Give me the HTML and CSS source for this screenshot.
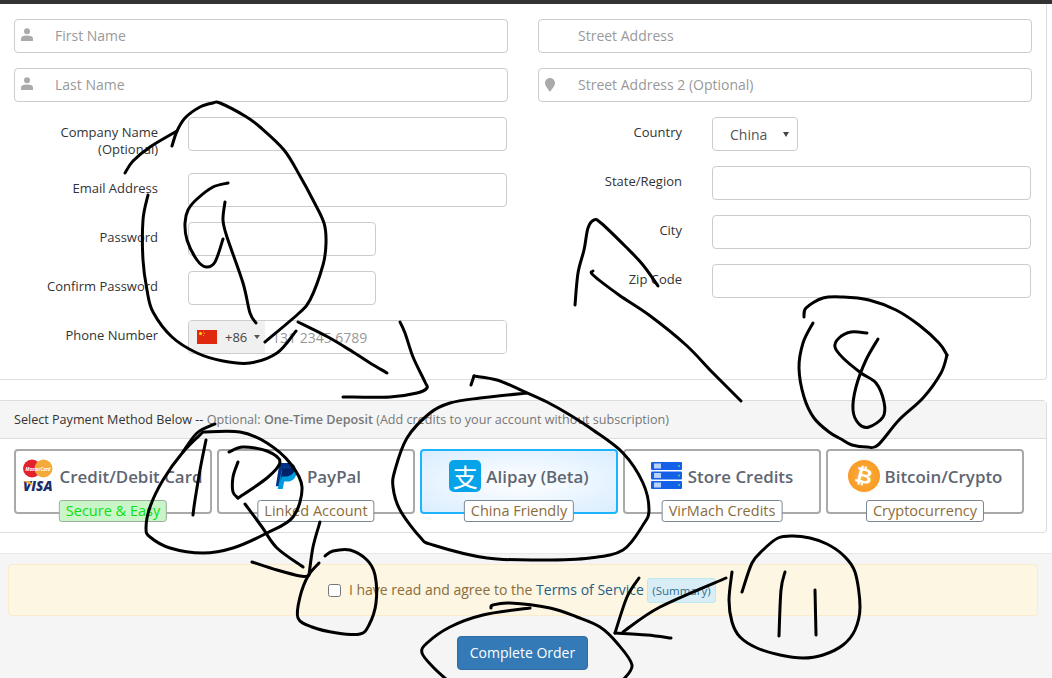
FILE: index.html
```html
<!DOCTYPE html>
<html lang="en">
<head>
<meta charset="utf-8">
<title>Checkout</title>
<link rel="stylesheet" href="styles.css">
</head>
<body>
<div class="topbar"></div>
<section class="form-panel">
  <div class="col">
    <div class="row icon-row">
      <svg class="field-icon" viewBox="0 0 12 14"><circle cx="6" cy="3.200" r="3"/><path d="M0 13v-2.500C0 8.500 2 7.500 6 7.500s6 1 6 3V13z"/></svg>
      <input class="field with-icon" placeholder="First Name">
    </div>
    <div class="row icon-row">
      <svg class="field-icon" viewBox="0 0 12 14"><circle cx="6" cy="3.200" r="3"/><path d="M0 13v-2.500C0 8.500 2 7.500 6 7.500s6 1 6 3V13z"/></svg>
      <input class="field with-icon" placeholder="Last Name">
    </div>
    <div class="row labelled tall"><label>Company Name (Optional)</label><input class="field"></div>
    <div class="row labelled"><label>Email Address</label><input class="field"></div>
    <div class="row labelled"><label>Password</label><input class="field short" type="password"></div>
    <div class="row labelled"><label>Confirm Password</label><input class="field short" type="password"></div>
    <div class="row labelled last"><label>Phone Number</label>
      <div class="phone">
        <div class="dial">
          <svg class="flag" viewBox="0 0 20 14"><rect width="20" height="14" fill="#de2910"/><circle cx="3.500" cy="3.500" r="1.500" fill="#ffde00"/><circle cx="6.500" cy="2" r=".5" fill="#ffde00"/><circle cx="7.500" cy="3.500" r=".5" fill="#ffde00"/><circle cx="6.500" cy="5.500" r=".5" fill="#ffde00"/></svg>
          <span class="code">+86</span><span class="dial-caret"></span>
        </div>
        <input class="phone-input" placeholder="131 2345 6789">
      </div>
    </div>
  </div>
  <div class="col">
    <div class="row icon-row"><input class="field with-icon" placeholder="Street Address"></div>
    <div class="row icon-row">
      <svg class="field-icon pin" viewBox="0 0 10 14"><path d="M5 0C2.200 0 0 2.200 0 5c0 3 3.500 6.500 5 9 1.500-2.500 5-6 5-9 0-2.800-2.200-5-5-5z"/></svg>
      <input class="field with-icon" placeholder="Street Address 2 (Optional)">
    </div>
    <div class="row labelled"><label>Country</label><span class="select-wrap"><select class="country"><option>China</option></select></span></div>
    <div class="row labelled"><label>State/Region</label><input class="field"></div>
    <div class="row labelled"><label>City</label><input class="field"></div>
    <div class="row labelled last"><label>Zip Code</label><input class="field"></div>
  </div>
</section>

<section class="pay-panel">
  <header class="pay-head">Select Payment Method Below -- <span class="muted">Optional: <b>One-Time Deposit</b> (Add credits to your account without subscription)</span></header>
  <div class="methods">
    <div class="method">
      <svg class="cards" viewBox="0 0 32 34"><circle cx="9" cy="9.500" r="9" fill="#e2232e"/><circle cx="20.500" cy="9.500" r="9" fill="#f5a93a"/><text x="15" y="11.500" class="mc">MasterCard</text><text x="0" y="32" class="visa">VISA</text><path d="M0 22h7l2 4.500C6 24.500 3 23 0 22z" fill="#f5a93a"/></svg>
      <span>Credit/Debit Card</span><em class="tag green">Secure &amp; Easy</em>
    </div>
    <div class="method">
      <svg class="pp" viewBox="0 0 24 28"><path d="M5 0h10c5 0 8 3 7 8-1 6-5 9-11 9H8l-1.500 8H1z" fill="#003087"/><path d="M8 5h10c4 0 6 2 5 7-1 5-5 8-10 8h-3l-1.500 8H3z" fill="#009cde"/><path d="M8 5h10.500c1 0 2 .3 3 .8C21 11 17 14.500 11 14.500H7.600L6 20z" fill="#012169"/></svg>
      <span>PayPal</span><em class="tag">Linked Account</em>
    </div>
    <div class="method selected">
      <span class="ali">支</span>
      <span>Alipay (Beta)</span><em class="tag">China Friendly</em>
    </div>
    <div class="method">
      <svg class="srv" viewBox="0 0 32 28"><rect y="0" width="31" height="8" rx="1" fill="#1560e8"/><rect x="3" y="1.500" width="7" height="5" fill="#b9d2f7"/><circle cx="28" cy="4" r=".9" fill="#5fe08a"/><rect y="9.500" width="31" height="8" rx="1" fill="#1560e8"/><rect x="3" y="11" width="7" height="5" fill="#b9d2f7"/><circle cx="28" cy="13.500" r=".9" fill="#5fe08a"/><rect y="19" width="31" height="8" rx="1" fill="#1560e8"/><rect x="3" y="20.500" width="7" height="5" fill="#b9d2f7"/><circle cx="28" cy="23" r=".9" fill="#5fe08a"/></svg>
      <span>Store Credits</span><em class="tag">VirMach Credits</em>
    </div>
    <div class="method">
      <span class="btc"><i>₿</i></span>
      <span>Bitcoin/Crypto</span><em class="tag">Cryptocurrency</em>
    </div>
  </div>
</section>

<section class="order-panel">
  <div class="tos">
    <input type="checkbox" class="tick">
    <span class="tos-text">I have read and agree to the <a class="tos-link">Terms of Service</a></span>
    <span class="summary">(Summary)</span>
  </div>
  <button class="submit">Complete Order</button>
</section>

<svg class="ink" viewBox="0 0 1052 678">
  <polyline points="125,173 133,161 150,147 177,131"/>
  <polyline points="172,146 177,131 185,118 200,107 213,103 220,103 245,116 260,127 284,150 300,176 313,200 324,223 326,243 323,265 310,300 298,314 265,342"/>
  <polyline points="296,331 277,353 250,363 223,361 197,353 172,337 153,312 147,290 143,260 143,220 148,195"/>
  <polyline points="228,183 213,187 197,199 188,210 185,223 187,240 197,260 206,267 215,262 223,239"/>
  <polyline points="225,202 223,220 227,237 243,283 250,313 256,323"/>
  <polyline points="298,322 328,337 353,352 370,363 387,373"/>
  <polyline points="343,397 390,397 417,393 427,388 425,382 413,357 405,333 400,322"/>
  <polyline points="471,385 474,376"/>
  <polyline points="474,376 497,380 523,391 547,402 570,415 593,430 623,453 643,483 649,510 643,525 623,550 590,558 543,560 487,558 433,545 420,537 400,510 393,487 395,470 407,438 430,413 450,403 480,398 527,393"/>
  <polyline points="593,271 593,275 619,295 649,315 686,345 713,373 741,401"/>
  <polyline points="575,305 578,273 584,250 588,228 594,220 601,223 626,247 643,265 658,286"/>
  <polyline points="804,317 806,308 823,298 843,297 869,300 896,310 919,325 939,343 947,355"/>
  <polyline points="947,355 941,373 923,398 899,420 878,445 867,447 852,445 841,439 829,432 814,418 804,397 799,368 803,343 813,323"/>
  <polyline points="867,333 851,332 839,338 835,347 843,358 861,373 876,383 884,402 883,417 869,427 859,424 853,410 856,387 866,360 878,339"/>
  <polyline points="215,424 197,433 183,452"/>
  <polyline points="203,432 240,432 267,443 290,463 302,487 293,517 267,533 233,548 203,553 170,548 150,537 146,528 150,507 163,480 183,452 203,432"/>
  <polyline points="206,440 200,470 195,500 193,515"/>
  <polyline points="229,452 243,447 267,451 280,462 267,478 238,498"/>
  <polyline points="238,498 233,492 233,477 238,462"/>
  <polyline points="245,504 262,527 277,548 303,567"/>
  <polyline points="252,562 277,570 300,576 308,576"/>
  <polyline points="320,522 313,547 309,575"/>
  <polyline points="319,563 308,576 300,597 298,618 312,627 337,633 360,634 369,625 376,603 375,575 367,560 350,550 333,551 325,556"/>
  <polyline points="491,608 493,605 510,603 550,608 577,617 600,627 617,643 632,665 623,680"/>
  <polyline points="530,608 483,615 450,627 427,643 422,653 433,667 447,680"/>
  <polyline points="639,578 627,597 615,633"/>
  <polyline points="615,633 647,635 671,638"/>
  <polyline points="623,632 660,607 726,578"/>
  <polyline points="742,592 752,563 763,550 778,538 793,536 810,538 827,544 843,555 855,572 860,607 855,630 843,645 823,655 803,658 780,655 757,648 740,637 732,622 729,600 732,572"/>
  <polyline points="785,572 781,590 779,636"/>
  <polyline points="815,590 816,635"/>
</svg>
<script src="ink.js"></script>
</body>
</html>
```

FILE: styles.css
```css
* { box-sizing: border-box; }
html, body { margin: 0; height: 678px; overflow: hidden; background: #fff; }
body { position: relative; font-family: "Open Sans", sans-serif; font-size: 14px; color: #333; }

.topbar { height: 4px; background: #333; }

.form-panel {
  display: flex; gap: 30px;
  width: 1050px; margin-left: -3px; padding: 15px 0 25px 17px;
  border: solid #ddd; border-width: 0 1px 1px 0; border-radius: 0 0 4px 4px;
}
.col { width: 494px; }
.row { margin-bottom: 15px; }
.row.last { margin-bottom: 0; }
.icon-row { position: relative; }
.field-icon { position: absolute; left: 7px; top: 9px; width: 12px; height: 14px; fill: #aaa; }
.field-icon.pin { top: 10px; width: 10px; }

.field {
  display: block; width: 100%; height: 34px; padding: 5px 12px 7px;
  border: 1px solid #ccc; border-radius: 4px; outline: 0; background: #fff;
  font: 14px "Open Sans", sans-serif; color: #555;
}
.field.with-icon { padding-left: 40px; }
.col + .col .field.with-icon { padding-left: 39px; }
.field::placeholder, .phone-input::placeholder { color: #999; opacity: 1; }

.labelled { display: flex; gap: 30px; margin-right: 1px; }
.labelled label {
  flex: 0 0 144px; padding-top: 7px; text-align: right;
  font-size: 13px; font-weight: 500; line-height: 17px;
}
.labelled .field { flex: 1; width: auto; min-width: 0; }
.labelled .field.short { flex: 0 0 188px; }
.tall { height: 41px; }

.select-wrap { position: relative; display: block; width: 86px; height: 34px; }
.select-wrap::after {
  content: ""; position: absolute; right: 9px; top: 15px;
  border: 3.500px solid transparent; border-top: 5px solid #444; border-bottom: 0;
}
.country {
  appearance: none; display: block; width: 86px; height: 34px; padding: 0 0 0 17px;
  border: 1px solid #ccc; border-radius: 4px; background: #fff; outline: 0;
  font: 14px "Open Sans", sans-serif; color: #555;
}

.phone { flex: 1; display: flex; height: 34px; border: 1px solid #ccc; border-radius: 4px; overflow: hidden; }
.dial { flex: 0 0 76px; display: flex; align-items: center; padding-left: 8px; background: #f0f0f0; }
.flag { width: 20px; height: 14px; }
.code { margin-left: 8px; font-size: 13px; color: #444; }
.dial-caret { margin-left: 7px; border: 3px solid transparent; border-top: 4px solid #555; border-bottom: 0; }
.phone-input { flex: 1; min-width: 0; border: 0; outline: 0; padding: 0 7px; font: 14px "Open Sans", sans-serif; }

.pay-panel {
  width: 1050px; margin: 20px 0 0 -3px;
  border: 1px solid #ddd; border-radius: 4px;
}
.pay-head {
  height: 38px; padding: 9px 0 0 16px; background: #f5f5f5; border-bottom: 1px solid #ddd;
  font-size: 12.600px; line-height: 20px;
}
.muted { color: #777; }
.muted b { font-weight: 600; }
.methods { display: flex; gap: 5px; height: 93px; padding: 10px 0 0 16px; }
.method {
  position: relative; flex: 0 0 198px; height: 65px; padding-bottom: 11px;
  display: flex; align-items: center; justify-content: center; gap: 5px;
  border: 2px solid #a9a9a9; border-radius: 4px;
  font-size: 16.900px; font-weight: 600; color: #5e6672; white-space: nowrap;
}
.method.selected {
  border-color: #1db4ff;
  background: radial-gradient(ellipse at center, #fff 0%, #d9edff 100%);
}
.tag {
  position: absolute; left: 50%; top: 49px; transform: translateX(-50%);
  height: 22px; padding: 0 6px; background: #fff;
  border: 1px solid #7a8793; border-radius: 3px;
  font-style: normal; font-weight: 400; font-size: 14.500px; line-height: 20px; color: #8a6d3b;
}
.tag.green { background: #c9f5c9; border-color: #9aaf9a; color: #0ce00c; }
.cards { width: 32px; height: 34px; margin-left: -1px; overflow: visible; }
.mc { font: italic 700 4.500px "Open Sans", sans-serif; fill: #fff; text-anchor: middle; }
.visa { font: italic 800 13.500px "Open Sans", sans-serif; fill: #1a2e6c; }
.pp { width: 24px; height: 26px; margin: 0 4px 0 3px; }
.ali {
  width: 32px; height: 32px; border-radius: 5px; background: #06a3e9;
  display: flex; align-items: center; justify-content: center;
  font: 400 25px/1 "Noto Sans CJK SC", sans-serif; color: #fff;
}
.srv { width: 32px; height: 28px; }
.btc {
  width: 32px; height: 32px; border-radius: 50%;
  background: radial-gradient(circle at center, #fbb040 0%, #f7931a 100%);
  display: flex; align-items: center; justify-content: center;
  font: 700 21px/1 "DejaVu Sans", sans-serif; color: #fff;
}
.btc i { font-style: normal; transform: rotate(14deg); }

.order-panel {
  margin-top: 20px; height: 125px; padding: 10px 14px 0 8px;
  background: #f5f5f5; border-top: 1px solid #e8e8e8;
}
.tos {
  width: 1030px; height: 52px; padding-right: 2px;
  display: flex; align-items: center; justify-content: center;
  background: #fcf6e2; border: 1px solid #faebcc; border-radius: 4px;
  color: #8a6d3b; font-size: 14px;
}
.tick { width: 13px; height: 13px; margin: 0 8px 0 0; }
.tos-text { margin-bottom: 2px; }
.tos-link { color: #245d86; }
.summary {
  margin-left: 3px; height: 25px; padding: 0 4.500px; line-height: 23px; font-size: 11.500px;
  background: #d9edf7; border: 1px solid #bce8f1; border-radius: 3px; color: #31708f;
}
.submit {
  display: block; width: 131px; height: 34px; margin: 20px 0 0 449px; padding: 0 0 2px;
  background: #337ab7; border: 1px solid #2e6da4; border-radius: 4px;
  font: 14px "Open Sans", sans-serif; color: #fff;
}

.ink {
  position: absolute; left: 0; top: 0; width: 1052px; height: 678px; pointer-events: none;
  fill: none; stroke: #000; stroke-width: 3; stroke-linejoin: round; stroke-linecap: round;
}
```

FILE: ink.js
```js
// Turns each hand-drawn stroke's sample points into a smooth Catmull-Rom curve.
document.querySelectorAll('.ink polyline').forEach(function (line) {
  var nums = line.getAttribute('points').trim().split(/[\s,]+/).map(Number);
  var p = [];
  for (var i = 0; i < nums.length; i += 2) p.push([nums[i], nums[i + 1]]);
  var d = 'M' + p[0][0] + ' ' + p[0][1];
  for (var k = 0; k < p.length - 1; k++) {
    var a = p[k - 1] || p[k], b = p[k], c = p[k + 1], e = p[k + 2] || c;
    d += 'C' + (b[0] + (c[0] - a[0]) / 6).toFixed(1) + ' ' + (b[1] + (c[1] - a[1]) / 6).toFixed(1) +
         ' ' + (c[0] - (e[0] - b[0]) / 6).toFixed(1) + ' ' + (c[1] - (e[1] - b[1]) / 6).toFixed(1) +
         ' ' + c[0] + ' ' + c[1];
  }
  var path = document.createElementNS('http://www.w3.org/2000/svg', 'path');
  path.setAttribute('d', d);
  line.replaceWith(path);
});
```
